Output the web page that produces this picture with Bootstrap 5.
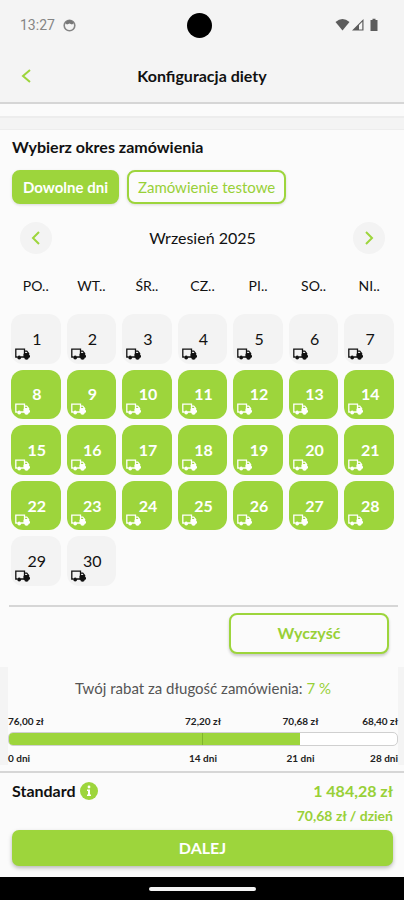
<!DOCTYPE html>
<html lang="pl">
<head>
<meta charset="utf-8">
<meta name="viewport" content="width=device-width, initial-scale=1">
<title>Konfiguracja diety</title>
<link rel="stylesheet" href="https://cdn.jsdelivr.net/npm/bootstrap@5.3.0/dist/css/bootstrap.min.css">
<style>
  :root { --lime: #9dd53c; --lime-text: #98d037; --soft: #f4f4f4; --page: #fbfbfb; --line: #d6d6d6; }
  body { font-family: Lato, sans-serif; background: var(--page); color: #111; font-size: 15px; line-height: 20px; }
  button { font-family: inherit; }
  .status { background: var(--soft); height: 50px; padding: 0 25px 0 20px; color: #858585; font-family: Roboto, sans-serif; font-size: 14px; }
  .side { flex: 1 1 0; }
  .camera { width: 25px; height: 25px; background: #000; }
  .appbar { background: var(--soft); height: 54px; padding: 0 16px; border-bottom: 2px solid var(--line); }
  .appbar h1 { font-size: 16px; line-height: 20px; }
  .icon-btn { width: 32px; height: 32px; padding: 0; border: 0; border-radius: 50%; background: transparent; color: var(--lime); }
  .band { height: 14px; margin-top: 12px; background: var(--soft); border-top: 2px solid #ededed; border-bottom: 1px solid #ededed; }
  .period { padding: 7px 12px 0; }
  .period h2 { font-size: 16px; line-height: 20px; margin-bottom: 13px; }
  .choice { height: 34px; padding: 0 9px; border: 2px solid var(--lime); border-radius: 8px; font-size: 15px; line-height: 20px; box-shadow: 0 1px 3px #0002; }
  .lime-fill { background: var(--lime); color: #fff; }
  .lime-line { background: var(--page); color: var(--lime-text); }
  .monthbar { padding: 18px 19px 0 20px; font-size: 16px; }
  .monthbar .icon-btn { background: #f3f3f3; }
  .week { display: grid; grid-template-columns: repeat(7, minmax(0, 1fr)); gap: 6px; padding: 0 10px 0 11px; }
  .week-names { padding-top: 22px; padding-bottom: 18px; font-size: 14px; text-align: center; }
  .day { position: relative; aspect-ratio: 1; padding: 0 0 0 2px; border: 0; border-radius: 12px; background: #f3f3f3; color: #111; font-size: 16px; line-height: 20px; }
  .day.picked { background: var(--lime); color: #fff; font-weight: 700; }
  .day svg { position: absolute; left: 4px; bottom: 4px; width: 15px; height: 12px; }
  .clear-row { margin: 19px 6px 0 9px; padding: 6px 9px 13px; border-top: 2px solid var(--line); }
  .clear { width: 160px; height: 41px; border: 2px solid var(--lime); border-radius: 8px; font-size: 16px; box-shadow: 0 2px 3px #0003; }
  .discount { border: solid var(--soft); border-width: 0 6px 0 8px; padding-top: 11px; color: #555; }
  .discount p { font-size: 15px; }
  .lime-text { color: var(--lime-text); }
  .scale { display: grid; grid-template-columns: 3fr 2fr 2fr 1fr; font-size: 10px; line-height: 14px; text-align: center; font-weight: 700; color: #222; white-space: nowrap; }
  .scale > :first-child { text-align: left; }
  .scale > :last-child { justify-self: end; }
  .meter { height: 14px; margin: 4px 0 5px; border: 1px solid #d0d0d0; border-radius: 5px; background: #fff; }
  .meter .progress-bar { background: var(--lime); }
  .meter .first-half { border-right: 1px solid #80b52c; }
  .summary { margin-top: 6px; padding: 8px 11px 11px 12px; border-top: 2px solid var(--line); }
  .plan { font-size: 16px; }
  .info { width: 18px; height: 18px; padding: 0; border: 0; }
  .total { font-size: 16px; }
  .daily { font-size: 14px; margin: 5px 0 4px; }
  .next { height: 36px; border: 0; border-radius: 7px; font-size: 16px; box-shadow: 0 2px 4px #0004; }
  .gesture { height: 23px; background: #000; }
  .gesture span { width: 107px; height: 4px; background: #f4f4f4; border-radius: 2px; }
</style>
<script src="https://cdn.jsdelivr.net/npm/bootstrap@5.3.0/dist/js/bootstrap.bundle.min.js"></script>
</head>
<body class="d-flex flex-column min-vh-100">
<svg class="d-none" aria-hidden="true">
  <symbol id="truck" viewBox="0 0 15 12">
    <path d="M2.500 9H.8V1.200h8.700V9H5.800" fill="none" stroke="currentColor" stroke-width="1.300"/>
    <path d="M9.500 3.200h2.300l2 2.500" fill="none" stroke="currentColor" stroke-width="1.200"/>
    <path d="M8.500 6 9.500 5h4.700v2l.8.500v2h-1.200a2 2 0 0 1-3.800 0H8.500z" fill="currentColor"/>
    <circle cx="4.200" cy="9.500" r="1.900" fill="currentColor"/><circle cx="11.500" cy="9.600" r="2.200" fill="currentColor"/>
  </symbol>
</svg>

<div class="status d-flex align-items-center">
  <div class="side d-flex align-items-center gap-2">
    <span>13:27</span>
    <svg width="13" height="13" viewBox="0 0 13 13" aria-hidden="true"><circle cx="6.500" cy="6.500" r="5.300" fill="none" stroke="#858585" stroke-width="1.600"/><path d="M2 4Q6.500-2 11 4L9 5.500 6.500 4.500 4 5.500z" fill="#777"/></svg>
  </div>
  <div class="camera rounded-circle"></div>
  <div class="side d-flex justify-content-end align-items-center">
    <svg width="44" height="14" viewBox="0 0 44 14" aria-hidden="true"><g fill="#5c5c5c"><path d="M.5 4Q7.500-2 14.500 4L7.500 12.500z"/><path d="M17 12.500 28.500 1v11.500zM24 7v4.500h3.300V3.700z" fill-rule="evenodd"/><path d="M35.500 2h2V.8h3V2h2v11h-7z"/></g></svg>
  </div>
</div>

<header class="appbar d-flex align-items-center">
  <div class="side"><button class="icon-btn d-flex align-items-center" aria-label="Wstecz"><svg class="ms-1" width="14" height="16" viewBox="0 0 14 16" fill="none" stroke="currentColor" stroke-width="2"><path d="m10 2-7 6 7 6"/></svg></button></div>
  <h1 class="fw-bold mb-0">Konfiguracja diety</h1>
  <div class="side"></div>
</header>
<div class="band"></div>

<main>
  <section class="period">
    <h2 class="fw-bold">Wybierz okres zamówienia</h2>
    <div class="d-flex gap-2">
      <button class="choice lime-fill fw-bold">Dowolne dni</button>
      <button class="choice lime-line">Zamówienie testowe</button>
    </div>
  </section>

  <div class="monthbar d-flex justify-content-between align-items-center">
    <button class="icon-btn d-flex align-items-center justify-content-center" aria-label="Poprzedni miesiąc"><svg width="14" height="16" viewBox="0 0 14 16" fill="none" stroke="currentColor" stroke-width="2"><path d="m10 2-6 6 6 6"/></svg></button>
    <span>Wrzesień 2025</span>
    <button class="icon-btn d-flex align-items-center justify-content-center" aria-label="Następny miesiąc"><svg width="14" height="16" viewBox="0 0 14 16" fill="none" stroke="currentColor" stroke-width="2"><path d="m4 2 6 6-6 6"/></svg></button>
  </div>

  <div class="week week-names"><span>PO..</span><span>WT..</span><span>ŚR..</span><span>CZ..</span><span>PI..</span><span>SO..</span><span>NI..</span></div>
  <div class="week">
    <button class="day">1<svg><use href="#truck"/></svg></button>
    <button class="day">2<svg><use href="#truck"/></svg></button>
    <button class="day">3<svg><use href="#truck"/></svg></button>
    <button class="day">4<svg><use href="#truck"/></svg></button>
    <button class="day">5<svg><use href="#truck"/></svg></button>
    <button class="day">6<svg><use href="#truck"/></svg></button>
    <button class="day">7<svg><use href="#truck"/></svg></button>
    <button class="day picked">8<svg><use href="#truck"/></svg></button>
    <button class="day picked">9<svg><use href="#truck"/></svg></button>
    <button class="day picked">10<svg><use href="#truck"/></svg></button>
    <button class="day picked">11<svg><use href="#truck"/></svg></button>
    <button class="day picked">12<svg><use href="#truck"/></svg></button>
    <button class="day picked">13<svg><use href="#truck"/></svg></button>
    <button class="day picked">14<svg><use href="#truck"/></svg></button>
    <button class="day picked">15<svg><use href="#truck"/></svg></button>
    <button class="day picked">16<svg><use href="#truck"/></svg></button>
    <button class="day picked">17<svg><use href="#truck"/></svg></button>
    <button class="day picked">18<svg><use href="#truck"/></svg></button>
    <button class="day picked">19<svg><use href="#truck"/></svg></button>
    <button class="day picked">20<svg><use href="#truck"/></svg></button>
    <button class="day picked">21<svg><use href="#truck"/></svg></button>
    <button class="day picked">22<svg><use href="#truck"/></svg></button>
    <button class="day picked">23<svg><use href="#truck"/></svg></button>
    <button class="day picked">24<svg><use href="#truck"/></svg></button>
    <button class="day picked">25<svg><use href="#truck"/></svg></button>
    <button class="day picked">26<svg><use href="#truck"/></svg></button>
    <button class="day picked">27<svg><use href="#truck"/></svg></button>
    <button class="day picked">28<svg><use href="#truck"/></svg></button>
    <button class="day">29<svg><use href="#truck"/></svg></button>
    <button class="day">30<svg><use href="#truck"/></svg></button>
  </div>

  <div class="clear-row d-flex justify-content-end"><button class="clear lime-line fw-bold">Wyczyść</button></div>

  <section class="discount">
    <p class="text-center mb-3">Twój rabat za długość zamówienia: <span class="lime-text">7 %</span></p>
    <div class="scale"><span>76,00 zł</span><span>72,20 zł</span><span>70,68 zł</span><span>68,40 zł</span></div>
    <div class="meter d-flex overflow-hidden" role="progressbar" aria-label="Długość zamówienia" aria-valuenow="21" aria-valuemin="0" aria-valuemax="28">
      <div class="progress-bar first-half" style="width:50%"></div>
      <div class="progress-bar" style="width:25%"></div>
    </div>
    <div class="scale"><span>0 dni</span><span>14 dni</span><span>21 dni</span><span>28 dni</span></div>
  </section>
</main>

<footer class="mt-auto">
  <div class="summary">
    <div class="d-flex justify-content-between align-items-center">
      <div class="plan d-flex align-items-center gap-1 fw-bold">Standard
        <button class="info lime-fill rounded-circle d-flex" aria-label="Informacje"><svg width="18" height="18" viewBox="0 0 18 18" fill="#fff"><circle cx="9" cy="5" r="1.400"/><path d="M7 7.500h3v5h1V14H7v-1.500h1V9H7z"/></svg></button>
      </div>
      <div class="total lime-text fw-bold">1 484,28 zł</div>
    </div>
    <div class="daily lime-text fw-bold text-end">70,68 zł / dzień</div>
    <button class="next lime-fill fw-bold w-100">DALEJ</button>
  </div>
  <div class="gesture d-flex align-items-center justify-content-center"><span></span></div>
</footer>
</body>
</html>
